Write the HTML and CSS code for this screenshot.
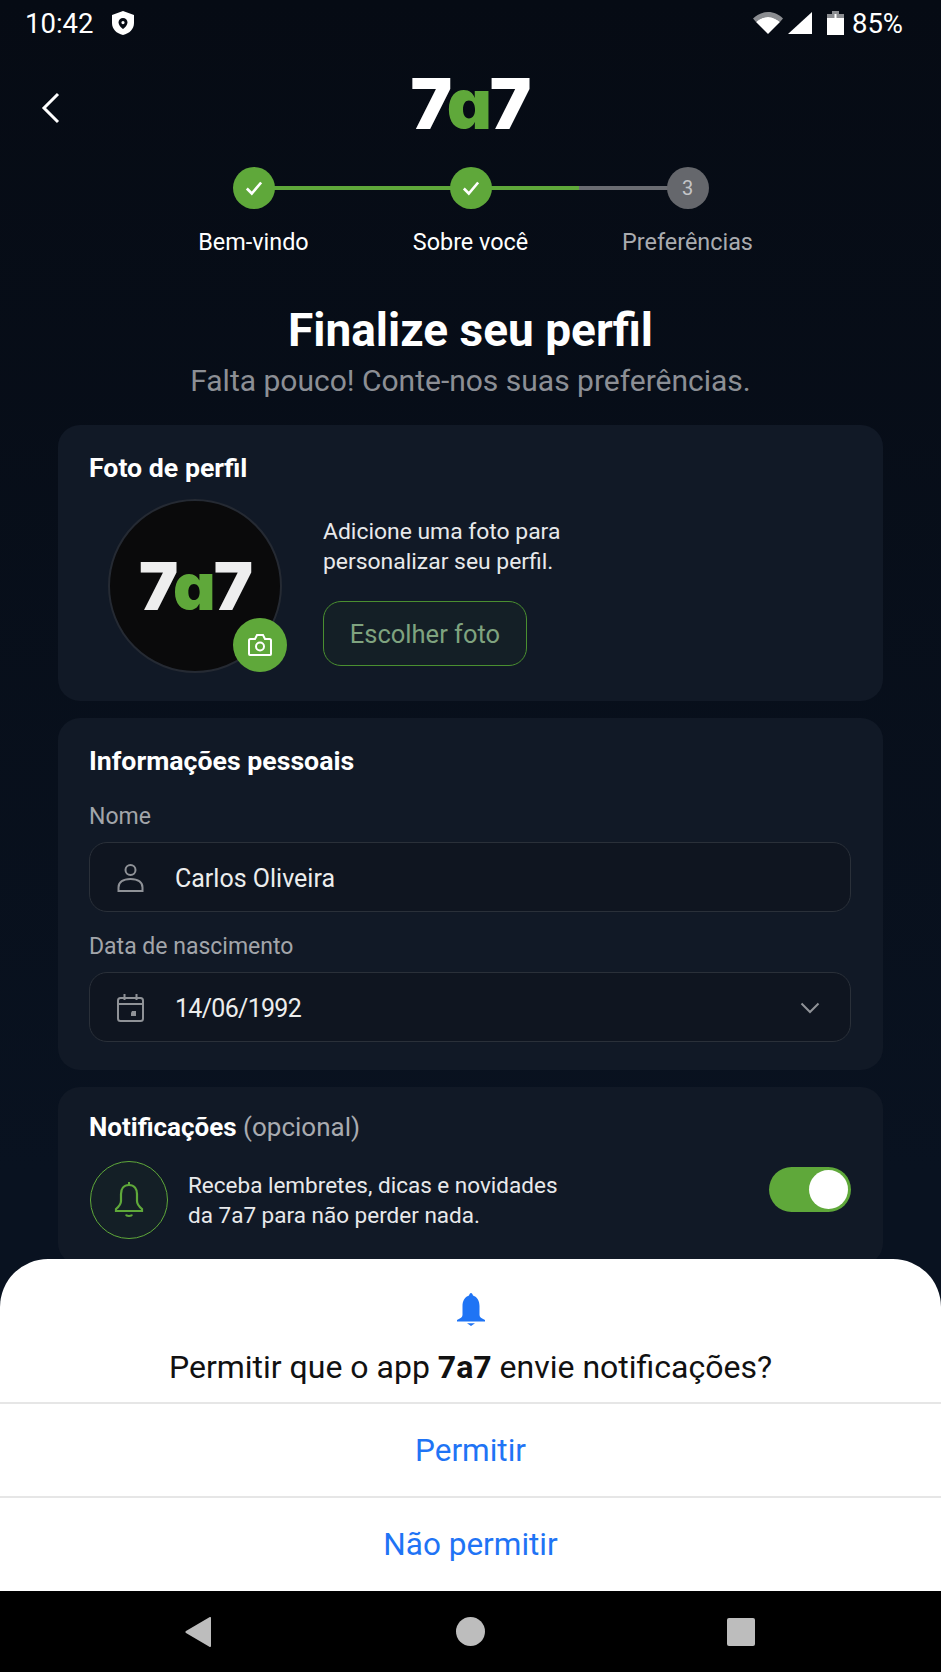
FILE: index.html
```html
<!DOCTYPE html>
<html lang="pt-BR">
<head>
    <meta charset="UTF-8">
    <meta name="viewport" content="width=device-width, initial-scale=1.0">
    <title>7a7 - Finalize seu perfil</title>
    <link rel="stylesheet" href="styles.css">
</head>
<body>
    <div class="screen">
        <div class="main">
            <div class="status-bar">
                <span class="status-time">10:42</span>
                <svg class="status-shield" viewBox="0 0 24 24"><path fill="#fff" fill-rule="evenodd" d="M12 0 23 4v8c0 6-4.500 10.500-11 12C5.500 22.500 1 18 1 12V4zM12 7a4.500 4.500 0 0 0-4.500 4.500C7.500 14 10 16.500 12 18c2-1.500 4.500-4 4.500-6.500A4.500 4.500 0 0 0 12 7zm0 3a1.600 1.600 0 1 1 0 3.200 1.600 1.600 0 0 1 0-3.200z"/></svg>
                <span class="status-spacer"></span>
                <svg class="status-wifi" viewBox="0 0 30 22"><path fill="#8b8d91" d="M0 6.500C4 2.500 9 0 15 0s11 2.500 15 6.500l-3 3.500C23.500 7 19.500 5 15 5S6.500 7 3 10z"/><path fill="#fff" d="M3 10c3.500-3 7.500-5 12-5s8.500 2 12 5L15 22z"/></svg>
                <svg class="status-signal" viewBox="0 0 24 22"><path fill="#fff" d="M24 0v22H0z"/></svg>
                <svg class="status-battery" viewBox="0 0 17 24"><path fill="#8b8d91" d="M5 0h7v3h5v5H0V3h5z"/><path fill="#fff" d="M0 7h7.500V3H9.500v4H17v17H0z"/></svg>
                <span class="status-pct">85%</span>
            </div>

            <div class="top-bar">
                <svg class="back-icon" viewBox="0 0 19 32"><path d="M17 2 3 16l14 14" fill="none" stroke="#fff" stroke-width="3"/></svg>
                <div class="logo">7<span class="logo-a">a</span>7</div>
            </div>

            <div class="stepper">
                <div class="step-line"></div>
                <div class="step-line-done"></div>
                <div class="step done">
                    <div class="step-dot"><svg viewBox="0 0 20 20"><path d="M3.500 10.500 8 15l8.500-10" fill="none" stroke="#fff" stroke-width="2.400"/></svg></div>
                    <span>Bem-vindo</span>
                </div>
                <div class="step done">
                    <div class="step-dot"><svg viewBox="0 0 20 20"><path d="M3.500 10.500 8 15l8.500-10" fill="none" stroke="#fff" stroke-width="2.400"/></svg></div>
                    <span>Sobre você</span>
                </div>
                <div class="step">
                    <div class="step-dot">3</div>
                    <span>Preferências</span>
                </div>
            </div>

            <h1>Finalize seu perfil</h1>
            <p class="subtitle">Falta pouco! Conte-nos suas preferências.</p>

            <section class="card card-foto">
                <h2>Foto de perfil</h2>
                <div class="foto-row">
                    <div class="avatar">
                        <div class="avatar-logo">7<span class="logo-a">a</span>7</div>
                        <div class="avatar-badge">
                            <svg viewBox="0 0 26 24"><path d="M2 7.500a1.500 1.500 0 0 1 1.500-1.500H8l2-4h6l2 4h4.500A1.500 1.500 0 0 1 24 7.500V21a1 1 0 0 1-1 1H3a1 1 0 0 1-1-1z" fill="none" stroke="#fff" stroke-width="2"/><circle cx="13" cy="13.500" r="4" fill="none" stroke="#fff" stroke-width="2"/></svg>
                        </div>
                    </div>
                    <div class="foto-info">
                        <p>Adicione uma foto para<br>personalizar seu perfil.</p>
                        <button class="btn-foto">Escolher foto</button>
                    </div>
                </div>
            </section>

            <section class="card card-info">
                <h2>Informações pessoais</h2>
                <label>Nome</label>
                <div class="field">
                    <svg class="field-icon" viewBox="0 0 27 28"><circle cx="13.500" cy="6" r="5" fill="none" stroke="#8f9297" stroke-width="2"/><path d="M1.500 27v-3.500c0-5 4-8.500 12-8.500s12 3.500 12 8.500V27z" fill="none" stroke="#8f9297" stroke-width="2"/></svg>
                    <span>Carlos Oliveira</span>
                </div>
                <label class="label-data">Data de nascimento</label>
                <div class="field">
                    <svg class="field-icon" viewBox="0 0 27 28"><rect x="1" y="4" width="25" height="23" rx="2.500" fill="none" stroke="#8f9297" stroke-width="2"/><path d="M1 10h25M7.500 0v6M19.500 0v6" fill="none" stroke="#8f9297" stroke-width="2"/><path fill="#8f9297" d="M15 17h4v5h-5v-3z"/></svg>
                    <span class="field-date">14/06/1992</span>
                    <svg class="field-chevron" viewBox="0 0 20 12"><path d="m1.500 1.500 8.500 8.500 8.500-8.500" fill="none" stroke="#8f9297" stroke-width="2"/></svg>
                </div>
            </section>

            <section class="card card-notif">
                <h2>Notificações <span class="opcional">(opcional)</span></h2>
                <div class="notif-row">
                    <div class="notif-icon">
                        <svg viewBox="0 0 30 36"><path d="M15 3c-5.500 0-8 4-8 9v7c0 3-2 5.500-5 8v2h26v-2c-3-2.500-5-5-5-8v-7c0-5-2.500-9-8-9z" fill="none" stroke="#5fa83a" stroke-width="2.200"/><path d="M15 0v3M12 32.500c.5 2 5.500 2 6 0" fill="none" stroke="#5fa83a" stroke-width="2"/></svg>
                    </div>
                    <p>Receba lembretes, dicas e novidades<br>da 7a7 para não perder nada.</p>
                    <div class="toggle"><div class="toggle-knob"></div></div>
                </div>
            </section>
        </div>

        <div class="sheet">
            <div class="sheet-head">
                <svg class="sheet-bell" viewBox="0 0 28 33"><path fill="#1f74f5" d="M14 0c1 0 1.500 1 2 2.500C20.500 4 22.500 8 22.500 13v9c0 2 2 3.500 5.500 5v1.500H0V27c3.500-1.500 5.500-3 5.500-5v-9c0-5 2-9 6.500-10.500C12.500 1 13 0 14 0zM10 30.300h8L14 33z"/></svg>
                <p>Permitir que o app <b>7a7</b> envie notificações?</p>
            </div>
            <div class="sheet-btn">Permitir</div>
            <div class="sheet-btn">Não permitir</div>
        </div>

        <div class="nav-bar">
            <svg class="nav-back" viewBox="0 0 26 30"><path fill="#bdbdbd" d="M26 1v28a1 1 0 0 1-1.600.8L1 16a1.300 1.300 0 0 1 0-2L24.400.2A1 1 0 0 1 26 1z"/></svg>
            <div class="nav-home"></div>
            <div class="nav-recent"></div>
        </div>
    </div>
</body>
</html>
```

FILE: styles.css
```css
* {
    box-sizing: border-box;
}
html, body {
    margin: 0;
    padding: 0;
    background: #070c17;
}
body {
    font-family: Roboto, 'Noto Sans', sans-serif;
    color: #fff;
}
.screen {
    position: relative;
    width: 941px;
    height: 1672px;
    display: flex;
    flex-direction: column;
    overflow: hidden;
    background: linear-gradient(180deg, #060b14 0%, #091220 70%);
}
.main {
    flex: 1;
    min-height: 0;
    overflow: hidden;
}

/* status bar */
.status-bar {
    height: 46px;
    display: flex;
    align-items: center;
    padding: 0 38px 0 25px;
    font-size: 27.500px;
    color: #fff;
}
.status-time {
    width: 86px;
}
.status-shield {
    width: 24px;
    height: 24px;
}
.status-spacer {
    flex: 1;
}
.status-wifi {
    width: 30px;
    height: 22px;
    margin-right: 5px;
}
.status-signal {
    width: 24px;
    height: 22px;
    margin-right: 15px;
}
.status-battery {
    width: 17px;
    height: 24px;
    margin-right: 8px;
}

/* top */
.top-bar {
    position: relative;
    height: 100px;
    display: flex;
    justify-content: center;
    align-items: center;
    padding: 16px 1px 0 0;
}
.back-icon {
    position: absolute;
    left: 41px;
    top: 46px;
    width: 19px;
    height: 32px;
}
.logo {
    font-family: Inter, Roboto, sans-serif;
    font-feature-settings: "cv11";
    font-weight: 900;
    font-size: 70px;
    line-height: 1;
    letter-spacing: -2px;
}
.logo-a {
    color: #5fa83a;
}

/* stepper */
.stepper {
    position: relative;
    width: 651px;
    margin: 21px auto 0;
    display: grid;
    grid-template-columns: repeat(3, 1fr);
}
.step-line, .step-line-done {
    position: absolute;
    top: 19px;
    left: 108px;
    height: 4px;
}
.step-line {
    width: 434px;
    background: #6a6c72;
}
.step-line-done {
    width: 326px;
    background: #5fa83a;
}
.step {
    position: relative;
    display: flex;
    flex-direction: column;
    align-items: center;
    font-size: 23.400px;
    color: #a9abaf;
}
.step.done {
    color: #fff;
}
.step-dot {
    width: 42px;
    height: 42px;
    border-radius: 50%;
    background: #65676c;
    color: #c4c5c8;
    font-size: 20px;
    display: flex;
    justify-content: center;
    align-items: center;
    margin-bottom: 19px;
}
.step.done .step-dot {
    background: #5fa83a;
}
.step-dot svg {
    width: 22px;
    height: 22px;
}

h1 {
    margin: 47px 0 0;
    font-size: 46px;
    line-height: 54px;
    font-weight: 700;
    text-align: center;
}
.subtitle {
    margin: 6px 0 0;
    font-size: 30px;
    line-height: 36px;
    text-align: center;
    color: #8c8f95;
}

/* cards */
.card {
    margin: 0 58px 17px;
    background: #111926;
    border-radius: 22px;
    padding: 27px 32px 0 31px;
}
.card h2 {
    margin: 0;
    font-size: 26.700px;
    line-height: 32px;
    font-weight: 700;
}
.card-foto {
    margin-top: 26px;
    height: 276px;
}
.foto-row {
    display: flex;
    margin-top: 15px;
}
.avatar {
    position: relative;
    width: 174px;
    height: 174px;
    margin-left: 19px;
    border-radius: 50%;
    background: #0a0a0b;
    border: 2px solid #252a33;
    display: flex;
    justify-content: center;
    align-items: center;
}
.avatar-logo {
    font-family: Inter, Roboto, sans-serif;
    font-feature-settings: "cv11";
    font-weight: 900;
    font-size: 66px;
    line-height: 1;
    letter-spacing: -2px;
    color: #eeeeee;
}
.avatar-badge {
    position: absolute;
    right: -7px;
    bottom: -1px;
    width: 54px;
    height: 54px;
    border-radius: 50%;
    background: #5fa83a;
    display: flex;
    justify-content: center;
    align-items: center;
}
.avatar-badge svg {
    width: 26px;
    height: 24px;
}
.foto-info {
    margin-left: 41px;
    padding-top: 18px;
}
.foto-info p {
    margin: 0;
    font-size: 22.900px;
    line-height: 30px;
    color: #e8e9eb;
}
.btn-foto {
    display: block;
    margin-top: 24px;
    width: 204px;
    height: 65px;
    border: 1.500px solid #4a8f30;
    border-radius: 18px;
    background: #141f26;
    color: #7fa37f;
    font-family: Roboto, sans-serif;
    font-size: 25.500px;
}
.card-info {
    height: 352px;
}
.card-info label {
    display: block;
    margin-top: 26px;
    font-size: 23px;
    line-height: 28px;
    color: #a2a5aa;
}
.card-info .label-data {
    margin-top: 21px;
}
.field {
    margin-top: 11px;
    height: 70px;
    display: flex;
    align-items: center;
    padding: 2px 30px 0 27px;
    border: 1.500px solid #2a3039;
    border-radius: 18px;
    background: #0f1520;
    font-size: 25px;
    color: #eceded;
}
.field-date {
    letter-spacing: -0.700px;
}
.field-icon {
    width: 27px;
    height: 28px;
    margin-right: 31px;
}
.field-chevron {
    width: 20px;
    height: 12px;
    margin-left: auto;
}
.card-notif {
    height: 178px;
    padding-top: 24px;
}
.card-notif h2 {
    font-size: 26px;
}
.opcional {
    font-weight: 400;
    color: #a9abb0;
}
.notif-row {
    display: flex;
    align-items: flex-start;
    margin-top: 18px;
}
.notif-icon {
    width: 78px;
    height: 78px;
    margin-left: 1px;
    border-radius: 50%;
    border: 1.500px solid #5fa83a;
    background: #141f26;
    display: flex;
    justify-content: center;
    align-items: center;
}
.notif-icon svg {
    width: 30px;
    height: 36px;
}
.notif-row p {
    margin: 9px 0 0 20px;
    font-size: 22.500px;
    line-height: 30px;
    color: #e8e9eb;
}
.toggle {
    margin: 6px 0 0 auto;
    width: 82px;
    height: 45px;
    border-radius: 23px;
    background: #5fa83a;
    padding: 3px;
    display: flex;
    justify-content: flex-end;
}
.toggle-knob {
    width: 39px;
    height: 39px;
    border-radius: 50%;
    background: #fff;
}

/* permission sheet */
.sheet {
    position: absolute;
    left: 0;
    right: 0;
    bottom: 81px;
    height: 332px;
    background: #fff;
    border-radius: 48px 48px 0 0;
    color: #111;
}
.sheet-head {
    height: 143px;
    padding-top: 34px;
    display: flex;
    flex-direction: column;
    align-items: center;
}
.sheet-bell {
    width: 28px;
    height: 33px;
}
.sheet-head p {
    margin: 23px 0 0;
    font-size: 32px;
    line-height: 36px;
}
.sheet-btn {
    height: 94px;
    border-top: 2px solid #e6e6e6;
    display: flex;
    justify-content: center;
    align-items: center;
    font-size: 31.500px;
    color: #1f74f5;
}

/* android nav */
.nav-bar {
    position: relative;
    height: 81px;
    flex-shrink: 0;
    background: #000;
}
.nav-back {
    position: absolute;
    left: 185px;
    top: 26px;
    width: 26px;
    height: 30px;
}
.nav-home {
    position: absolute;
    left: 456px;
    top: 26px;
    width: 29px;
    height: 29px;
    border-radius: 50%;
    background: #bdbdbd;
}
.nav-recent {
    position: absolute;
    left: 727px;
    top: 27px;
    width: 28px;
    height: 28px;
    border-radius: 2px;
    background: #bdbdbd;
}
```
